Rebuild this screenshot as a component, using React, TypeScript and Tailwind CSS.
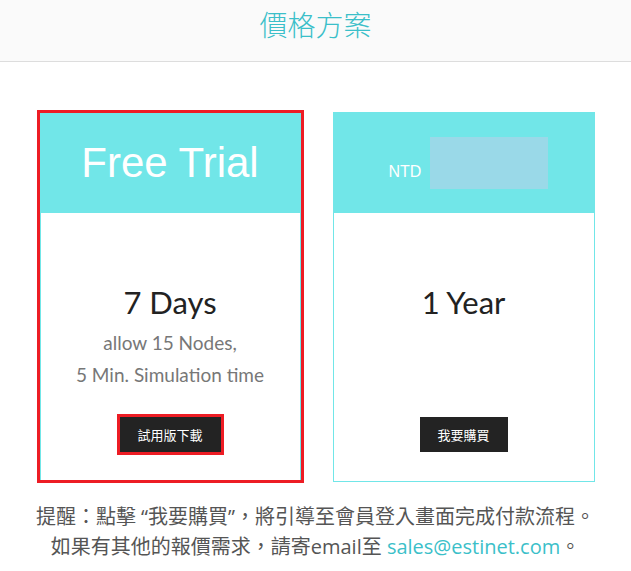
// Pricing plans page — two plan cards, trial one highlighted
const CYAN = "bg-[#71e6e8]"

function PlanBody({ title, lines, button, highlight }: { title: string; lines: string[]; button: string; highlight?: boolean }) {
  return (
    <div className="flex flex-col items-center pt-[69px] pb-[28px]">
      <div className="h-[40px] leading-[40px] text-[31px] text-[#222]" style={{ fontFamily: "Lato, 'Noto Sans', sans-serif" }}>{title}</div>
      <div className="h-[64px] mt-[5px] flex flex-col items-center text-[19px] text-[#777]" style={{ fontFamily: "Lato, 'Noto Sans', sans-serif" }}>
        {lines.map(l => <div key={l} className="h-[32px] leading-[32px]">{l}</div>)}
      </div>
      <div className={highlight ? "mt-[23px] border-[3px] border-[#ed1c24]" : "mt-[26px]"}>
        <div className={`h-[35px] ${highlight ? "w-[101px]" : "w-[88px]"} bg-[#232323] text-white text-[13px] flex items-center justify-center`}
          style={{ fontFamily: "'Noto Sans CJK TC', sans-serif" }}>
          {button}
        </div>
      </div>
    </div>
  )
}

export default function App() {
  return (
    <div className="w-[631px] h-[571px] bg-white overflow-hidden" style={{ fontFamily: "'Noto Sans CJK TC', sans-serif" }}>
      <div className="h-[62px] bg-[#fafafa] border-b border-[#dddddd] flex justify-center pt-[4px]">
        <h1 className="text-[28px] leading-[40px] font-light text-[#3bbfc9]">價格方案</h1>
      </div>

      <div className="flex justify-center items-start gap-[29px] pt-[48px]">
        {/* trial card, red outline */}
        <div className="border-[3px] border-[#ed1c24]">
          <div className="w-[261px]">
            <div className={`${CYAN} h-[100px] flex items-center justify-center`}>
              <span className="text-white text-[42px] leading-none" style={{ fontFamily: "'Liberation Sans', Arial, sans-serif" }}>Free Trial</span>
            </div>
            <div className="border-x border-[#71e6e8] h-[267px]">
              <PlanBody title="7 Days" lines={["allow 15 Nodes,", "5 Min. Simulation time"]} button="試用版下載" highlight />
            </div>
          </div>
        </div>

        {/* yearly card */}
        <div className="w-[262px] mt-[2px] border border-[#71e6e8]">
          <div className={`${CYAN} h-[100px] flex items-center pl-[55px] gap-[9px]`}>
            <span className="text-white text-[16px] mt-[18px]" style={{ fontFamily: "'Liberation Sans', Arial, sans-serif" }}>NTD</span>
            <div className="w-[118px] h-[52px] bg-[#9ad9e8]" />
          </div>
          <div className="h-[268px]">
            <PlanBody title="1 Year" lines={[]} button="我要購買" />
          </div>
        </div>
      </div>

      <div className="mt-[19px] text-center text-[20px] leading-[30px] text-[#555]" style={{ fontFamily: "'Open Sans', 'Noto Sans CJK TC', sans-serif" }}>
        <p>提醒：點擊 “我要購買”，將引導至會員登入畫面完成付款流程。</p>
        <p>如果有其他的報價需求，請寄email至 <span className="text-[#3bbfc9]">sales@estinet.com</span>。</p>
      </div>
    </div>
  )
}
